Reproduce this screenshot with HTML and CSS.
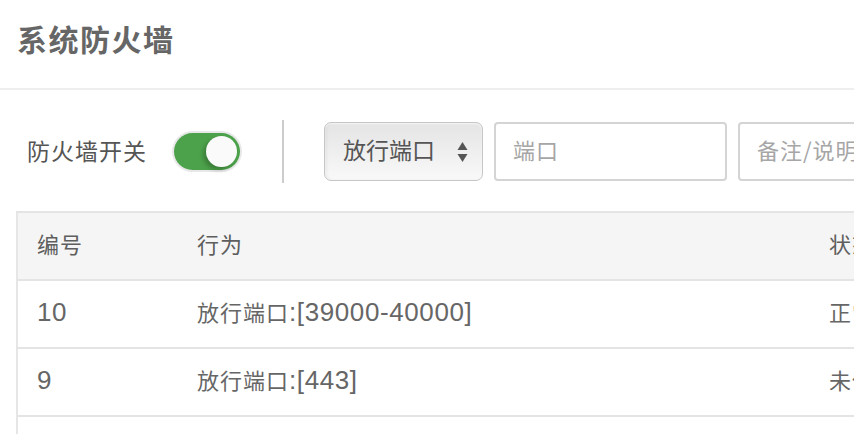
FILE: index.html
```html
<!DOCTYPE html>
<html lang="zh-CN">
<head>
<meta charset="utf-8">
<title>系统防火墙</title>
<link rel="stylesheet" href="styles.css">
</head>
<body>
<div class="page">
  <header class="head">
    <h1 class="title">系统防火墙</h1>
  </header>
  <div class="toolbar">
    <span class="label">防火墙开关</span>
    <span class="switch on"><span class="knob"></span></span>
    <span class="vsep"></span>
    <div class="select">
      <span class="select-text">放行端口</span>
      <svg class="arrows" width="11" height="22" viewBox="0 0 11 22"><path d="M5.5 1 L10.5 9 H0.5 Z" fill="#555"/><path d="M5.5 21 L10.5 13 H0.5 Z" fill="#555"/></svg>
    </div>
    <div class="input port"><span class="ph">端口</span></div>
    <div class="input note"><span class="ph">备注/说明</span></div>
  </div>
  <table class="grid">
    <thead>
      <tr><th class="c1">编号</th><th class="c2">行为</th><th class="c3">状态</th></tr>
    </thead>
    <tbody>
      <tr><td><span class="num">10</span></td><td>放行端口<span class="num">:[39000-40000]</span></td><td>正常</td></tr>
      <tr><td><span class="num">9</span></td><td>放行端口<span class="num">:[443]</span></td><td>未使用</td></tr>
      <tr><td></td><td></td><td></td></tr>
    </tbody>
  </table>
</div>
</body>
</html>
```
FILE: styles.css
```css
html, body {
  margin: 0;
  padding: 0;
  background: #fff;
  overflow: hidden;
}
body {
  font-family: "Noto Sans CJK SC", "Liberation Sans", sans-serif;
  color: #666;
}
.page {
  width: 1100px;
}
.head {
  height: 90px;
  box-sizing: border-box;
  border-bottom: 2px solid #eeeeee;
  display: flex;
  align-items: center;
  padding: 0 0 12px 17px;
}
.title {
  margin: 0;
  font-size: 30px;
  font-weight: 700;
  letter-spacing: 1.5px;
  color: #666;
  line-height: 40px;
}
.toolbar {
  display: flex;
  align-items: center;
  padding: 30px 0 28px 27px;
}
.label {
  font-size: 23px;
  line-height: 30px;
  color: #555;
  letter-spacing: 1px;
  margin-right: 25px;
  padding-bottom: 4px;
}
.switch {
  width: 66px;
  height: 37px;
  border-radius: 19px;
  background: #4ca24a;
  box-shadow: 0 0 0 2px #e8e8e8;
  display: flex;
  align-items: center;
  justify-content: flex-end;
  padding: 0 3px;
  box-sizing: border-box;
  margin: 0 2px;
}
.knob {
  width: 31px;
  height: 31px;
  border-radius: 50%;
  background: #fafafa;
  box-shadow: -3px 3px 4px rgba(0,0,0,0.22);
}
.vsep {
  width: 2px;
  height: 63px;
  background: #cccccc;
  margin: 0 40px 0 40px;
}
.select {
  width: 159px;
  height: 59px;
  box-sizing: border-box;
  border: 1.5px solid #c6c6c6;
  border-radius: 7px;
  background: linear-gradient(#e4e4e4, #f9f9f9);
  box-shadow: inset 0 1px 2px rgba(255,255,255,0.8), inset 2px 0 3px rgba(0,0,0,0.05);
  display: flex;
  align-items: center;
  justify-content: space-between;
  padding: 0 14px 0 18px;
}
.select-text {
  font-size: 23px;
  line-height: 30px;
  color: #555;
  padding-bottom: 6px;
}
.arrows {
  display: block;
}
.input {
  height: 59px;
  box-sizing: border-box;
  border: 2px solid #d4d4d4;
  border-radius: 4px;
  margin-left: 11px;
  display: flex;
  align-items: center;
  padding-left: 17px;
  background: #fff;
}
.input.port {
  width: 233px;
}
.input.note {
  width: 260px;
}
.ph {
  font-size: 22px;
  line-height: 30px;
  letter-spacing: 1px;
  color: #a6a6a6;
  padding-bottom: 6px;
}
.grid {
  margin-left: 16px;
  border-collapse: collapse;
  table-layout: fixed;
  width: 1000px;
  font-size: 22px;
  line-height: 30px;
  letter-spacing: 1px;
  color: #666;
}
.grid th, .grid td {
  height: 60px;
  padding: 0 0 6px 19px;
  text-align: left;
  font-weight: normal;
  border-top: 2px solid #e4e4e4;
  border-bottom: 2px solid #e4e4e4;
  white-space: nowrap;
  overflow: hidden;
}
.grid tr > :first-child {
  border-left: 2px solid #e6e6e6;
}
.grid thead th {
  background: #f5f5f5;
  color: #5e5e5e;
}
.grid .c1 { width: 141px; }
.grid .c2 { width: 613px; }
.num {
  font-family: "Liberation Sans", sans-serif;
  font-size: 26px;
  letter-spacing: 0.6px;
}
```
